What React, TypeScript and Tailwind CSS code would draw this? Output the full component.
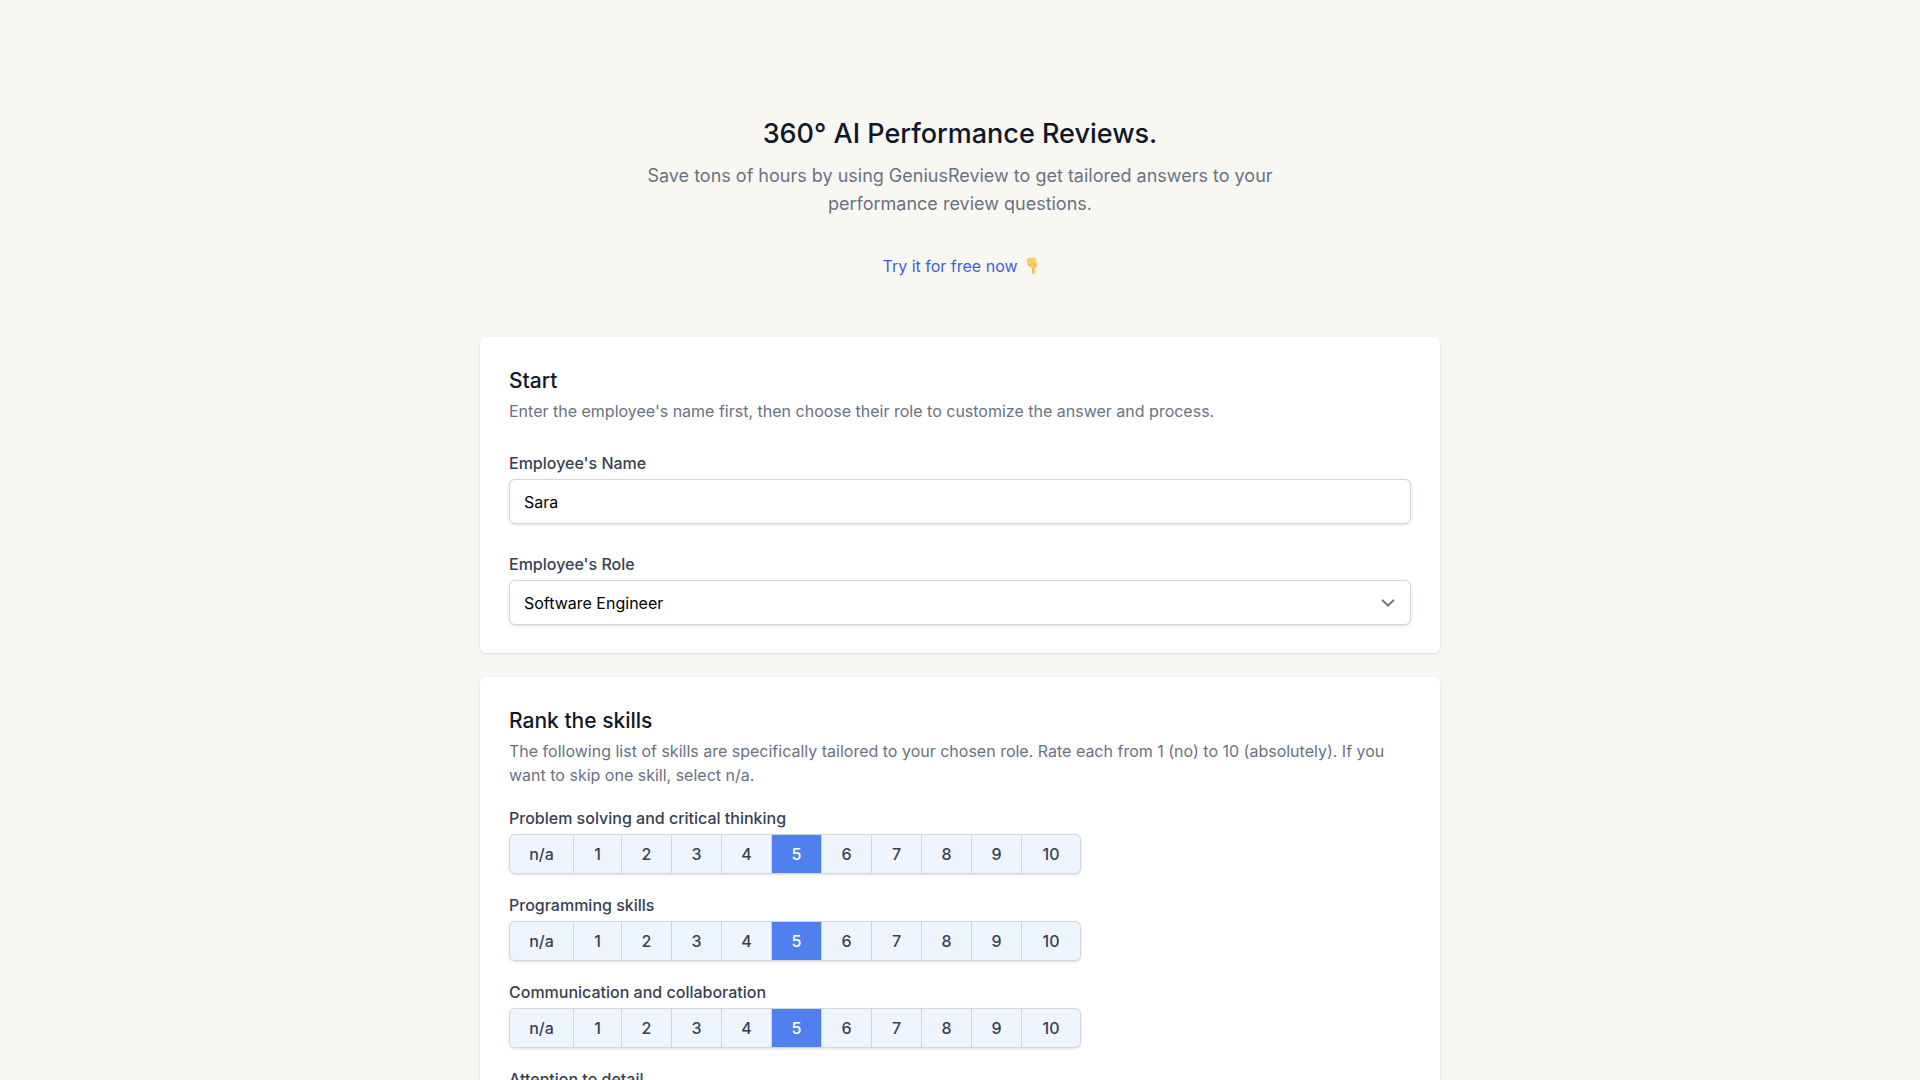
import { useState } from "react";
import type { ReactNode } from "react";

const SKILLS = [
  "Problem solving and critical thinking",
  "Programming skills",
  "Communication and collaboration",
  "Attention to detail",
];

const RATINGS = ["n/a", "1", "2", "3", "4", "5", "6", "7", "8", "9", "10"];

const ROLES = ["Software Engineer", "Product Manager", "Designer"];

function ratingWidth(rating: string) {
  if (rating === "n/a") return "w-[65px]";
  if (rating === "1") return "w-12";
  if (rating === "10") return "w-[59px]";
  return "w-[50px]";
}

function PointingDown() {
  return (
    <svg viewBox="0 0 12 18" className="h-[18px] w-3" aria-hidden="true">
      <path
        d="M1.200 2C2 .8 3.200.400 4.600.400L8 .600c1 .1 1.700.700 2 1.700l1.500 5.600c.3 1.200-.1 2.100-1 2.400-.6.2-1 .1-1.400-.2l.1 6c0 .9-.6 1.500-1.300 1.500s-1.300-.6-1.300-1.500L6.500 10.900C4.600 10.700 2.700 9.400 1.700 7.700.5 5.700.2 3.600 1.200 2Z"
        fill="#fbcf6c"
      />
      <path
        d="M2.200 7C3.700 7.300 4.800 8 5.800 9.400M9.200 10 8.300 6.600M6.600 10.900 6.700 15.800"
        fill="none"
        stroke="#e2a548"
        strokeWidth="0.8"
        strokeLinecap="round"
      />
      <path d="M4 4.400C5.600 4.800 6.800 5.800 7.200 7.200" fill="none" stroke="#edb658" strokeWidth="0.7" strokeLinecap="round" />
    </svg>
  );
}

function Card({ title, description, children }: { title: string; description: string; children: ReactNode }) {
  return (
    <section className="rounded-md bg-white px-[29px] pt-[30px] pb-7 shadow">
      <h2 className="text-[21px] leading-7 font-medium text-gray-900">{title}</h2>
      <p className="mt-1 text-[16px] leading-6 text-gray-500">{description}</p>
      {children}
    </section>
  );
}

function SkillRating({ skill }: { skill: string }) {
  const [value, setValue] = useState("5");
  return (
    <fieldset>
      <legend className="text-[16px] leading-6 font-medium text-gray-700">{skill}</legend>
      <div className="mt-1 inline-flex rounded-md align-top shadow-sm">
        {RATINGS.map((rating) => (
          <label
            key={rating}
            className={`${ratingWidth(rating)} ${
              rating === value ? "bg-[#4f80ee] text-white" : "bg-[#eff5ff] text-gray-700"
            } relative flex h-10 cursor-pointer items-center justify-center border-y border-r border-gray-300 text-[16px] font-medium first:rounded-l-md first:border-l last:rounded-r-md`}
          >
            <input
              type="radio"
              name={skill}
              value={rating}
              checked={rating === value}
              onChange={() => setValue(rating)}
              className="sr-only"
            />
            {rating}
          </label>
        ))}
      </div>
    </fieldset>
  );
}

export default function App() {
  const [name, setName] = useState("Sara");
  const [role, setRole] = useState(ROLES[0]);
  return (
    <div className="min-h-screen bg-[#f8f7f2] font-['Inter',sans-serif]">
      <main className="mx-auto max-w-[960px] pt-[116px]">
        <header className="flex flex-col items-center text-center">
          <h1 className="text-[27px] leading-9 font-medium text-gray-900">360° AI Performance Reviews.</h1>
          <p className="mt-[10px] max-w-[640px] text-[18px] leading-7 text-gray-500">
            Save tons of hours by using GeniusReview to get tailored answers to your performance review questions.
          </p>
          <a href="#start" className="mt-9 flex items-center gap-2 text-[16px] leading-6 text-[#3f5fd8]">
            Try it for free now <PointingDown />
          </a>
        </header>

        <form id="start" className="mt-[59px] flex flex-col gap-6">
          <Card
            title="Start"
            description="Enter the employee's name first, then choose their role to customize the answer and process."
          >
            <div className="mt-7">
              <label htmlFor="name" className="block text-[16px] leading-6 font-medium text-gray-700">
                Employee's Name
              </label>
              <input
                id="name"
                type="text"
                value={name}
                onChange={(e) => setName(e.target.value)}
                className="mt-1 block h-[45px] w-full rounded-md border border-gray-300 bg-white px-[14px] text-[16px] text-black shadow-sm"
              />
            </div>
            <div className="mt-7">
              <label htmlFor="role" className="block text-[16px] leading-6 font-medium text-gray-700">
                Employee's Role
              </label>
              <div className="relative mt-1">
                <select
                  id="role"
                  value={role}
                  onChange={(e) => setRole(e.target.value)}
                  className="block h-[45px] w-full appearance-none rounded-md border border-gray-300 bg-white px-[14px] text-[16px] text-black shadow-sm"
                >
                  {ROLES.map((option) => (
                    <option key={option}>{option}</option>
                  ))}
                </select>
                <svg
                  viewBox="0 0 20 20"
                  className="pointer-events-none absolute inset-y-0 right-[11px] my-auto h-6 w-6"
                  fill="none"
                  stroke="#6b7280"
                  strokeWidth="1.7"
                  strokeLinecap="round"
                  strokeLinejoin="round"
                  aria-hidden="true"
                >
                  <path d="M5.500 7.800l4.500 4.400 4.500-4.400" />
                </svg>
              </div>
            </div>
          </Card>

          <Card
            title="Rank the skills"
            description="The following list of skills are specifically tailored to your chosen role. Rate each from 1 (no) to 10 (absolutely). If you want to skip one skill, select n/a."
          >
            <div className="mt-[19px] flex flex-col gap-[19px]">
              {SKILLS.map((skill) => (
                <SkillRating key={skill} skill={skill} />
              ))}
            </div>
          </Card>
        </form>
      </main>
    </div>
  );
}
